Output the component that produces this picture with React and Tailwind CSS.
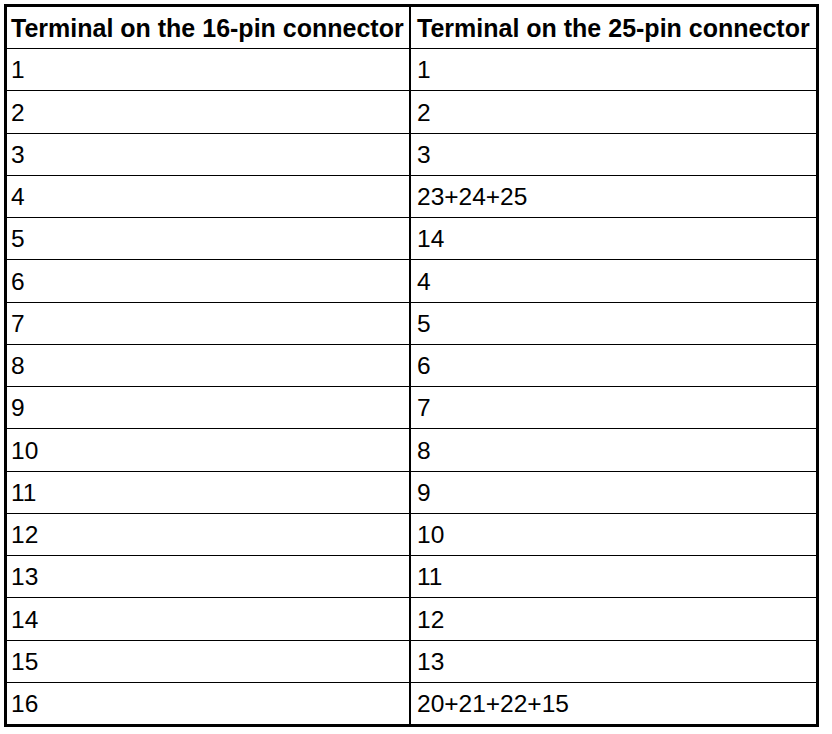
// Pin mapping table: 16-pin connector to 25-pin connector
const rows = [
  ["1", "1"],
  ["2", "2"],
  ["3", "3"],
  ["4", "23+24+25"],
  ["5", "14"],
  ["6", "4"],
  ["7", "5"],
  ["8", "6"],
  ["9", "7"],
  ["10", "8"],
  ["11", "9"],
  ["12", "10"],
  ["13", "11"],
  ["14", "12"],
  ["15", "13"],
  ["16", "20+21+22+15"],
];

export default function App() {
  return (
    <div className="w-[832px] h-[734px] bg-white pt-[4px] pl-[4px] font-['Liberation_Sans',Arial,sans-serif] text-black">
      <div className="w-[815px] h-[723px] border-[3px] border-black flex flex-col">
        {/* header */}
        <div className="h-[41px] grid grid-cols-[404px_1fr] text-[25px] font-bold leading-none">
          <div className="border-r-2 border-black flex items-center pl-[4px] pt-[2px] whitespace-nowrap">
            Terminal on the 16-pin connector
          </div>
          <div className="flex items-center pl-[6px] pt-[2px] whitespace-nowrap">
            Terminal on the 25-pin connector
          </div>
        </div>

        {/* body */}
        {rows.map(([a, b]) => (
          <div key={a} className="flex-1 border-t border-black grid grid-cols-[404px_1fr] text-[24.5px] leading-none">
            <div className="border-r-2 border-black flex items-center pl-[4px] pt-[2px]">{a}</div>
            <div className="flex items-center pl-[6px] pt-[2px]">{b}</div>
          </div>
        ))}
      </div>
    </div>
  );
}
